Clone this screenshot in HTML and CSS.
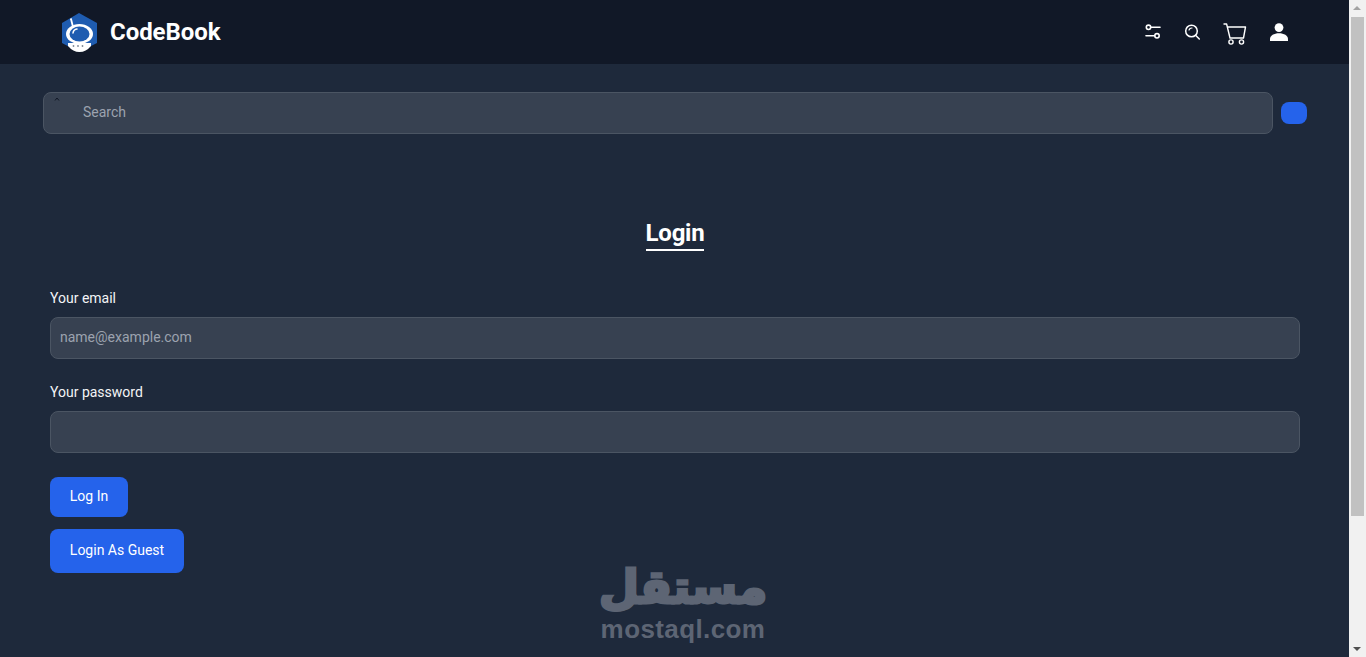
FILE: index.html
```html
<!DOCTYPE html>
<html lang="en">
<head>
<meta charset="utf-8">
<title>CodeBook</title>
<link rel="stylesheet" href="styles.css">
</head>
<body>
<div class="window">
  <div class="page">
    <header class="topbar">
      <a class="brand">
        <svg class="brand-logo" viewBox="0 0 40 40" width="40" height="40">
          <path d="M19 1 L37 11 V31 L19 40 L2 31 V11 Z" fill="#1f5cb0"/>
          <path d="M11 7 L13 15" stroke="#fff" stroke-width="1.8" stroke-linecap="round"/>
          <path d="M8 31 H31 V34 Q26 40 19.500 40 Q13 40 8 34 Z" fill="#fff"/>
          <ellipse cx="19.500" cy="22" rx="13.500" ry="10" fill="#fff"/>
          <ellipse cx="19.500" cy="22" rx="10" ry="7.500" fill="#1f5cb0"/>
          <path d="M13 21 Q13.500 17.500 17 17" stroke="#fff" stroke-width="1.500" fill="none" stroke-linecap="round"/>
          <circle cx="13.500" cy="34" r="0.900" fill="#7d8794"/><circle cx="18" cy="34" r="0.900" fill="#7d8794"/><circle cx="22.500" cy="34" r="0.900" fill="#7d8794"/>
        </svg>
        <span class="brand-name">CodeBook</span>
      </a>
      <nav class="actions">
        <svg class="ico ico-sliders" viewBox="0 0 16 16" width="16" height="16" fill="none" stroke="#fff" stroke-width="1.600" stroke-linecap="round">
          <circle cx="3.500" cy="3.300" r="2.200"/><path d="M6 3.300 H15"/>
          <circle cx="12" cy="11.800" r="2.200"/><path d="M1 11.800 H9.500"/>
        </svg>
        <svg class="ico ico-search" viewBox="0 0 16 16" width="16" height="16" fill="none" stroke="#fff" stroke-width="1.500" stroke-linecap="round">
          <circle cx="7.500" cy="7" r="5.800"/><path d="M11.800 11.400 L15.300 15"/><path d="M5 6 A3 3 0 0 1 8 4" stroke-width="1.200"/>
        </svg>
        <svg class="ico ico-cart" viewBox="0 0 24 22" width="24" height="22" fill="none" stroke="#fff" stroke-width="1.400" stroke-linecap="round" stroke-linejoin="round">
          <path d="M1 1 H3.600 L7 15 H20.500 L22.500 4 H4.400"/>
          <circle cx="8" cy="19" r="2.100"/><circle cx="18.500" cy="19" r="2.100"/>
        </svg>
        <svg class="ico ico-user" viewBox="0 0 18 18" width="18" height="18" fill="#fff">
          <circle cx="9" cy="4.600" r="4.400"/><path d="M0 18 V16.200 C0 12.500 4 10.300 9 10.300 C14 10.300 18 12.500 18 16.200 V18 Z"/>
        </svg>
      </nav>
    </header>

    <main class="content">
      <section class="searchbar">
        <div class="search-field">
          <svg class="search-mark" viewBox="0 0 6 4" width="6" height="4" fill="none" stroke="#111827" stroke-width="1"><path d="M1 3.500 L3 1 L5 3.500"/></svg>
          <input class="search-input" type="text" placeholder="Search">
        </div>
        <button class="search-btn" type="button" aria-label="Search"></button>
      </section>

      <section class="login">
        <h1 class="login-title"><span>Login</span></h1>
        <form class="login-form">
          <div class="field">
            <label class="field-label">Your email</label>
            <input class="field-input" type="email" placeholder="name@example.com">
          </div>
          <div class="field">
            <label class="field-label">Your password</label>
            <input class="field-input" type="password">
          </div>
          <button class="btn btn-login" type="button">Log In</button>
          <button class="btn btn-guest" type="button">Login As Guest</button>
        </form>
      </section>
    </main>

    <div class="watermark">
      <div class="wm-ar" lang="ar" dir="rtl">مستقل</div>
      <div class="wm-en">mostaql.com</div>
    </div>
  </div>

  <aside class="scrollbar">
    <div class="arrow arrow-up"></div>
    <div class="thumb"></div>
    <div class="arrow arrow-down"></div>
  </aside>
</div>
</body>
</html>
```

FILE: styles.css
```css
* { box-sizing: border-box; }
html, body { margin: 0; padding: 0; height: 100%; overflow: hidden; }
body { font-family: Roboto, "Liberation Sans", sans-serif; background: #1e293b; color: #fff; }

.window { display: flex; width: 1366px; height: 657px; overflow: hidden; }
.page { position: relative; flex: 1; min-width: 0; background: #1e293b; }

.topbar { height: 64px; background: #111827; display: flex; align-items: center; justify-content: space-between; padding: 0 61px 0 60px; }
.brand { display: flex; align-items: center; gap: 10px; }
.brand-logo { display: block; }
.brand-name { font-size: 24px; font-weight: 700; line-height: 32px; letter-spacing: -0.05px; }
.actions { display: flex; align-items: center; }
.ico { display: block; }
.ico-sliders { margin-right: 23px; }
.ico-search { margin-right: 23px; margin-top: -1px; }
.ico-cart { margin-right: 23px; margin-top: 3px; }
.ico-user { margin-top: -1px; }

.content { padding: 28px 42px 0 43px; }
.searchbar { display: flex; align-items: center; gap: 8px; }
.search-field { position: relative; flex: 1; }
.search-mark { position: absolute; left: 11px; top: 5px; }
.search-input { display: block; width: 100%; height: 42px; padding: 0 16px 2px 39px; background: #374151; border: 1px solid #4b5563; border-radius: 8px; color: #fff; font: 400 14px Roboto, sans-serif; outline: none; }
.search-input::placeholder, .field-input::placeholder { color: #9ca3af; opacity: 1; }
.search-btn { width: 26px; height: 22px; flex: none; background: #2563eb; border: 0; border-radius: 8px; padding: 0; }

.login { padding: 83px 7px 0; }
.login-title { margin: 0 0 37px; text-align: center; font-size: 24px; font-weight: 700; line-height: 32px; letter-spacing: -0.25px; }
.login-title span { display: inline-block; border-bottom: 2px solid #fff; line-height: 31px; height: 33px; }
.login-form { display: flex; flex-direction: column; align-items: flex-start; }
.field { width: 100%; margin-bottom: 24px; }
.field:first-child { margin-bottom: 23px; }
.field-label { display: block; font-size: 14px; font-weight: 400; line-height: 20px; margin-bottom: 9px; color: #f3f4f6; }
.field-input { display: block; width: 100%; height: 42px; padding: 0 9px 3px; background: #374151; border: 1px solid #4b5563; border-radius: 8px; color: #fff; font: 400 14px Roboto, sans-serif; outline: none; }

.btn { display: block; background: #2563eb; color: #fff; border: 0; border-radius: 8px; font: 400 14px Roboto, sans-serif; padding: 0 0 2px; white-space: nowrap; text-align: center; }
.btn-login { height: 40px; margin-bottom: 12px; width: 78px; }
.btn-guest { height: 44px; width: 134px; }

.watermark { position: absolute; left: 600px; top: 560px; width: 166px; color: #5d6574; pointer-events: none; display: flex; flex-direction: column; align-items: center; }
.wm-ar { font-family: "DejaVu Sans", sans-serif; font-weight: 700; font-size: 46px; line-height: 54px; height: 54px; white-space: nowrap; -webkit-text-stroke: 3px #5d6574; }
.wm-en { font-family: "Liberation Sans", sans-serif; font-weight: 700; font-size: 26px; line-height: 30px; white-space: nowrap; letter-spacing: 0.4px; }

.scrollbar { width: 17px; flex: none; height: 657px; background: #f1f1f1; display: flex; flex-direction: column; align-items: center; position: relative; }
.arrow { width: 0; height: 0; position: absolute; left: 4px; border-left: 4px solid transparent; border-right: 4px solid transparent; }
.arrow-up { top: 6px; border-bottom: 4px solid #a3a3a3; }
.arrow-down { bottom: 6px; border-top: 4px solid #505050; }
.thumb { width: 13px; margin-top: 17px; height: 499px; background: #c1c1c1; }
```
